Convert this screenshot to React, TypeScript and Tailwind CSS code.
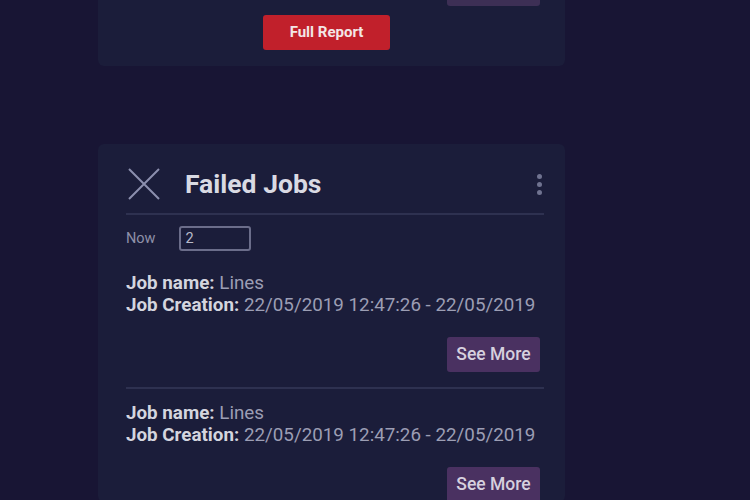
const jobs = [
  { name: 'Lines', creation: '22/05/2019 12:47:26 - 22/05/2019' },
  { name: 'Lines', creation: '22/05/2019 12:47:26 - 22/05/2019' },
];

function SeeMore() {
  return (
    <button className="h-[35px] w-[93px] rounded-[3px] bg-[#4a3161] text-[17.5px] font-medium text-[#d6d0de]">
      See More
    </button>
  );
}

export default function App() {
  return (
    <main
      className="h-[500px] w-[750px] overflow-hidden bg-[#181534] pl-[98px]"
      style={{ fontFamily: 'Roboto, "Liberation Sans", sans-serif' }}
    >
      {/* Summary card (scrolled past) */}
      <section className="-mt-[29px] w-[467px] rounded-md bg-[#1b1d3a] pb-[16px] pr-[25px]">
        <div className="flex justify-end">
          <div className="h-[35px] w-[93px] rounded-[3px] bg-[#3d2f55]" />
        </div>
        <div className="mt-[9px] flex justify-center pl-[15px]">
          <button className="h-[35px] w-[127px] rounded-[3px] bg-[#c1202b] text-[15px] font-bold text-[#f3e6e6]">
            Full Report
          </button>
        </div>
      </section>

      {/* Failed jobs */}
      <section className="mt-[78px] w-[467px] rounded-md bg-[#1b1d3a] pl-[28px] pr-[21px] pt-[20px]">
        <div className="flex h-[40px] items-center">
          <svg width="34" height="32" viewBox="0 0 34 32" className="ml-[1px]">
            <path d="M2 1 L32 31 M32 1 L2 31" stroke="#8c8fae" strokeWidth="2" fill="none" />
          </svg>
          <h2 className="ml-[24px] text-[26.5px] font-bold text-[#d9dae3]">Failed Jobs</h2>
          <div className="ml-auto mr-[2px] flex flex-col gap-[3px]">
            <span className="h-[5px] w-[5px] rounded-full bg-[#707390]" />
            <span className="h-[5px] w-[5px] rounded-full bg-[#707390]" />
            <span className="h-[5px] w-[5px] rounded-full bg-[#707390]" />
          </div>
        </div>
        <div className="mt-[9px] h-[2px] bg-[#2e3150]" />
        <div className="mt-[11px] flex items-center">
          <span className="text-[14.5px] text-[#8e90a8]">Now</span>
          <div className="ml-[23px] flex h-[25px] w-[72px] items-center rounded-[3px] border-2 border-[#6b6d8a] px-[5px] text-[14.5px] text-[#b8bacb]">
            2
          </div>
        </div>
        {jobs.map((job, i) => (
          <div key={i} className={i > 0 ? 'mt-[15px] border-t-2 border-[#2e3150] pt-[13px]' : 'mt-[21px]'}>
            <p className="whitespace-nowrap text-[18.8px] leading-[22px] text-[#9c9eb4]">
              <b className="font-bold text-[#d4d5df]">Job name: </b>
              {job.name}
            </p>
            <p className="whitespace-nowrap text-[18.8px] leading-[22px] text-[#9c9eb4]">
              <b className="font-bold text-[#d4d5df]">Job Creation: </b>
              {job.creation}
            </p>
            <div className="mt-[21px] flex justify-end pr-[4px]">
              <SeeMore />
            </div>
          </div>
        ))}
      </section>
    </main>
  );
}
